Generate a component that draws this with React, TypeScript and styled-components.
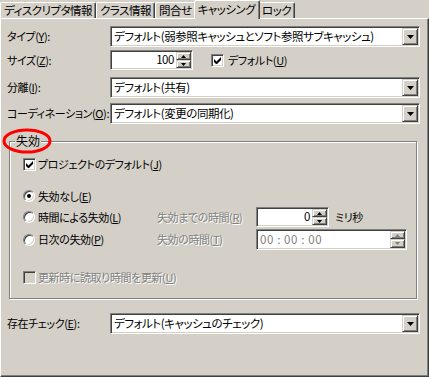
import React from "react";
import styled, { createGlobalStyle } from "styled-components";

const Global = createGlobalStyle`
  html, body { margin: 0; padding: 0; background: #d4d0c8; }
  body {
    font-family: "Noto Sans CJK JP", "Noto Sans", sans-serif;
    font-size: 11px;
    letter-spacing: -0.4px;
    font-feature-settings: "palt";
    color: #000;
  }
`;

const Window = styled.div`
  position: relative;
  width: 429px;
  height: 377px;
  background: #d4d0c8;
  display: flex;
  flex-direction: column;
  overflow: hidden;
`;

const TabStrip = styled.div`
  position: relative;
  z-index: 1;
  display: flex;
  align-items: flex-end;
  height: 18px;
`;

const Tab = styled.div<{ $active?: boolean }>`
  box-sizing: border-box;
  height: ${(p) => (p.$active ? 19 : 16)}px;
  margin: ${(p) => (p.$active ? "0 -2px -1px -2px" : "0")};
  padding: 0 ${(p) => (p.$active ? 4 : 3)}px 0 3px;
  background: #d4d0c8;
  border-top: 1px solid #fff;
  border-left: 1px solid #fff;
  border-right: 1px solid #404040;
  box-shadow: inset -1px 0 #808080;
  border-radius: 2px 2px 0 0;
  display: flex;
  align-items: center;
  white-space: nowrap;
  line-height: 1;
  font-size: 11.5px;
  letter-spacing: -0.5px;
  position: relative;
  z-index: ${(p) => (p.$active ? 2 : 0)};
`;

const Panel = styled.div`
  flex: 1;
  box-sizing: border-box;
  border-top: 1px solid #fff;
  border-left: 1px solid #fff;
  border-right: 1px solid #404040;
  border-bottom: 1px solid #404040;
  box-shadow: inset -1px -1px #808080;
  padding: 7px 8px 0 6px;
  display: flex;
  flex-direction: column;
`;

const FieldRow = styled.div<{ $top: number }>`
  display: grid;
  grid-template-columns: 103px 1fr;
  align-items: center;
  margin-top: ${(p) => p.$top}px;
`;

const Label = styled.span<{ $disabled?: boolean }>`
  white-space: nowrap;
  line-height: 1;
  color: ${(p) => (p.$disabled ? "#808080" : "#000")};
  text-shadow: ${(p) => (p.$disabled ? "1px 1px 0 #fff" : "none")};
`;

const Sunken = styled.div<{ $w?: number; $h: number; $bg?: string }>`
  box-sizing: border-box;
  width: ${(p) => (p.$w ? `${p.$w}px` : "auto")};
  height: ${(p) => p.$h}px;
  padding: 1px;
  background: ${(p) => p.$bg || "#fff"};
  border: 1px solid;
  border-color: #808080 #fff #fff #808080;
  box-shadow: inset 1px 1px #404040, inset -1px -1px #d4d0c8;
  display: flex;
  align-items: stretch;
`;

const FieldText = styled.span<{ $right?: boolean; $disabled?: boolean; $spread?: boolean }>`
  flex: 1;
  display: flex;
  align-items: center;
  justify-content: ${(p) => (p.$right ? "flex-end" : "flex-start")};
  padding: 0 ${(p) => (p.$right ? 2 : 0)}px 0 2px;
  white-space: pre;
  overflow: hidden;
  line-height: 1;
  font-size: 11.5px;
  letter-spacing: ${(p) => (p.$spread ? "0.6px" : "-0.45px")};
  color: ${(p) => (p.$disabled ? "#808080" : "#000")};
`;

const Raised = styled.div<{ $w: number; $h: number }>`
  box-sizing: border-box;
  width: ${(p) => p.$w}px;
  height: ${(p) => p.$h}px;
  background: #d4d0c8;
  border: 1px solid;
  border-color: #d4d0c8 #404040 #404040 #d4d0c8;
  box-shadow: inset 1px 1px #fff, inset -1px -1px #808080;
  display: flex;
  align-items: center;
  justify-content: center;
`;

const SpinColumn = styled.div`
  display: flex;
  flex-direction: column;
`;

const Arrow = ({ up, w = 7, color = "#000" }: { up?: boolean; w?: number; color?: string }) => {
  const h = Math.ceil(w / 2);
  return (
    <svg width={w} height={h} viewBox={`0 0 ${w} ${h}`}>
      <polygon
        points={up ? `${w / 2},0 ${w},${h} 0,${h}` : `0,0 ${w},0 ${w / 2},${h}`}
        fill={color}
      />
    </svg>
  );
};

const Combo = ({ text }: { text: React.ReactNode }) => (
  <Sunken $h={21}>
    <FieldText>{text}</FieldText>
    <Raised $w={16} $h={17}>
      <Arrow w={7} />
    </Raised>
  </Sunken>
);

const Spinner = ({ h, disabled }: { h: number; disabled?: boolean }) => (
  <SpinColumn>
    <Raised $w={15} $h={Math.floor(h / 2)}>
      <Arrow up w={5} color={disabled ? "#808080" : "#000"} />
    </Raised>
    <Raised $w={15} $h={Math.ceil(h / 2)}>
      <Arrow w={5} color={disabled ? "#808080" : "#000"} />
    </Raised>
  </SpinColumn>
);

const Inline = styled.div<{ $gap: number }>`
  display: flex;
  align-items: center;
  gap: ${(p) => p.$gap}px;
`;

const Box = styled.span<{ $disabled?: boolean }>`
  box-sizing: border-box;
  width: 13px;
  height: 13px;
  flex: none;
  background: ${(p) => (p.$disabled ? "#d4d0c8" : "#fff")};
  border: 1px solid;
  border-color: #808080 #fff #fff #808080;
  box-shadow: inset 1px 1px #404040, inset -1px -1px #d4d0c8;
  display: flex;
  align-items: center;
  justify-content: center;
`;

const Check = ({ checked, disabled }: { checked?: boolean; disabled?: boolean }) => (
  <Box $disabled={disabled}>
    {checked && (
      <svg width="7" height="7" viewBox="0 0 7 7">
        <path d="M0 2v3l2 2h1l4-4V0L2.5 4.5z" fill="#000" />
      </svg>
    )}
  </Box>
);

const RadioCircle = styled.span`
  box-sizing: border-box;
  width: 12px;
  height: 12px;
  flex: none;
  border-radius: 50%;
  background: #fff;
  border: 1px solid;
  border-color: #808080 #fff #fff #808080;
  box-shadow: inset 1px 1px #404040, inset -1px -1px #d4d0c8;
  display: flex;
  align-items: center;
  justify-content: center;
`;

const Dot = styled.span`
  width: 4px;
  height: 4px;
  border-radius: 50%;
  background: #000;
`;

const Radio = ({ on }: { on?: boolean }) => <RadioCircle>{on && <Dot />}</RadioCircle>;

const Group = styled.div`
  position: relative;
  margin: 17px 3px 0 2px;
  border: 1px solid #808080;
  box-shadow: inset 1px 1px #fff, 1px 1px #fff;
  padding: 0 0 14px 13px;
  display: flex;
  flex-direction: column;
`;

const Legend = styled.span`
  position: absolute;
  left: 5px;
  top: -7px;
  padding: 0 1px;
  background: #d4d0c8;
  line-height: 1;
  font-size: 12px;
  letter-spacing: 0;
`;

const GroupRow = styled.div<{ $top: number; $h: number }>`
  display: grid;
  grid-template-columns: 134px 99px auto;
  align-items: center;
  height: ${(p) => p.$h}px;
  margin-top: ${(p) => p.$top}px;
`;

const Unit = styled.span`
  margin-left: 6px;
  line-height: 1;
`;

const Ring = styled.svg`
  position: absolute;
  left: 2px;
  top: 128px;
  pointer-events: none;
`;

export default function App() {
  return (
    <Window>
      <Global />
      <TabStrip>
        <Tab>ディスクリプタ情報</Tab>
        <Tab>クラス情報</Tab>
        <Tab>問合せ</Tab>
        <Tab $active>キャッシング</Tab>
        <Tab>ロック</Tab>
      </TabStrip>
      <Panel>
        <FieldRow $top={0}>
          <Label>タイプ(<u>Y</u>):</Label>
          <Combo text="デフォルト(弱参照キャッシュとソフト参照サブキャッシュ)" />
        </FieldRow>
        <FieldRow $top={3}>
          <Label>サイズ(<u>Z</u>):</Label>
          <Inline $gap={18}>
            <Sunken $w={83} $h={20}>
              <FieldText $right>100</FieldText>
              <Spinner h={16} />
            </Sunken>
            <Inline $gap={4}>
              <Check checked />
              <Label>デフォルト(<u>U</u>)</Label>
            </Inline>
          </Inline>
        </FieldRow>
        <FieldRow $top={7}>
          <Label>分離(<u>I</u>):</Label>
          <Combo text="デフォルト(共有)" />
        </FieldRow>
        <FieldRow $top={5}>
          <Label>コーディネーション(<u>O</u>):</Label>
          <Combo text="デフォルト(変更の同期化)" />
        </FieldRow>

        <Group>
          <Legend>失効</Legend>
          <GroupRow $top={16} $h={13}>
            <Inline $gap={2}>
              <Check checked />
              <Label>プロジェクトのデフォルト(<u>J</u>)</Label>
            </Inline>
          </GroupRow>
          <GroupRow $top={17} $h={16}>
            <Inline $gap={3}>
              <Radio on />
              <Label>失効なし(<u>E</u>)</Label>
            </Inline>
          </GroupRow>
          <GroupRow $top={3} $h={20}>
            <Inline $gap={3}>
              <Radio />
              <Label>時間による失効(<u>L</u>)</Label>
            </Inline>
            <Label $disabled>失効までの時間(<u>R</u>)</Label>
            <Inline $gap={0}>
              <Sunken $w={73} $h={20}>
                <FieldText $right>0</FieldText>
                <Spinner h={16} />
              </Sunken>
              <Unit>ミリ秒</Unit>
            </Inline>
          </GroupRow>
          <GroupRow $top={2} $h={21}>
            <Inline $gap={3}>
              <Radio />
              <Label>日次の失効(<u>P</u>)</Label>
            </Inline>
            <Label $disabled>失効の時間(<u>T</u>)</Label>
            <Sunken $w={151} $h={21}>
              <FieldText $disabled $spread>00 : 00 : 00</FieldText>
              <Spinner h={17} disabled />
            </Sunken>
          </GroupRow>
          <GroupRow $top={21} $h={13}>
            <Inline $gap={2}>
              <Check disabled />
              <Label $disabled>更新時に読取り時間を更新(<u>U</u>)</Label>
            </Inline>
          </GroupRow>
        </Group>

        <FieldRow $top={14}>
          <Label>存在チェック(<u>E</u>):</Label>
          <Combo text="デフォルト(キャッシュのチェック)" />
        </FieldRow>
      </Panel>
      <Ring width="50" height="26" viewBox="0 0 50 26">
        <ellipse cx="25" cy="13" rx="23" ry="11" fill="none" stroke="#ff0000" strokeWidth="3" />
      </Ring>
    </Window>
  );
}
